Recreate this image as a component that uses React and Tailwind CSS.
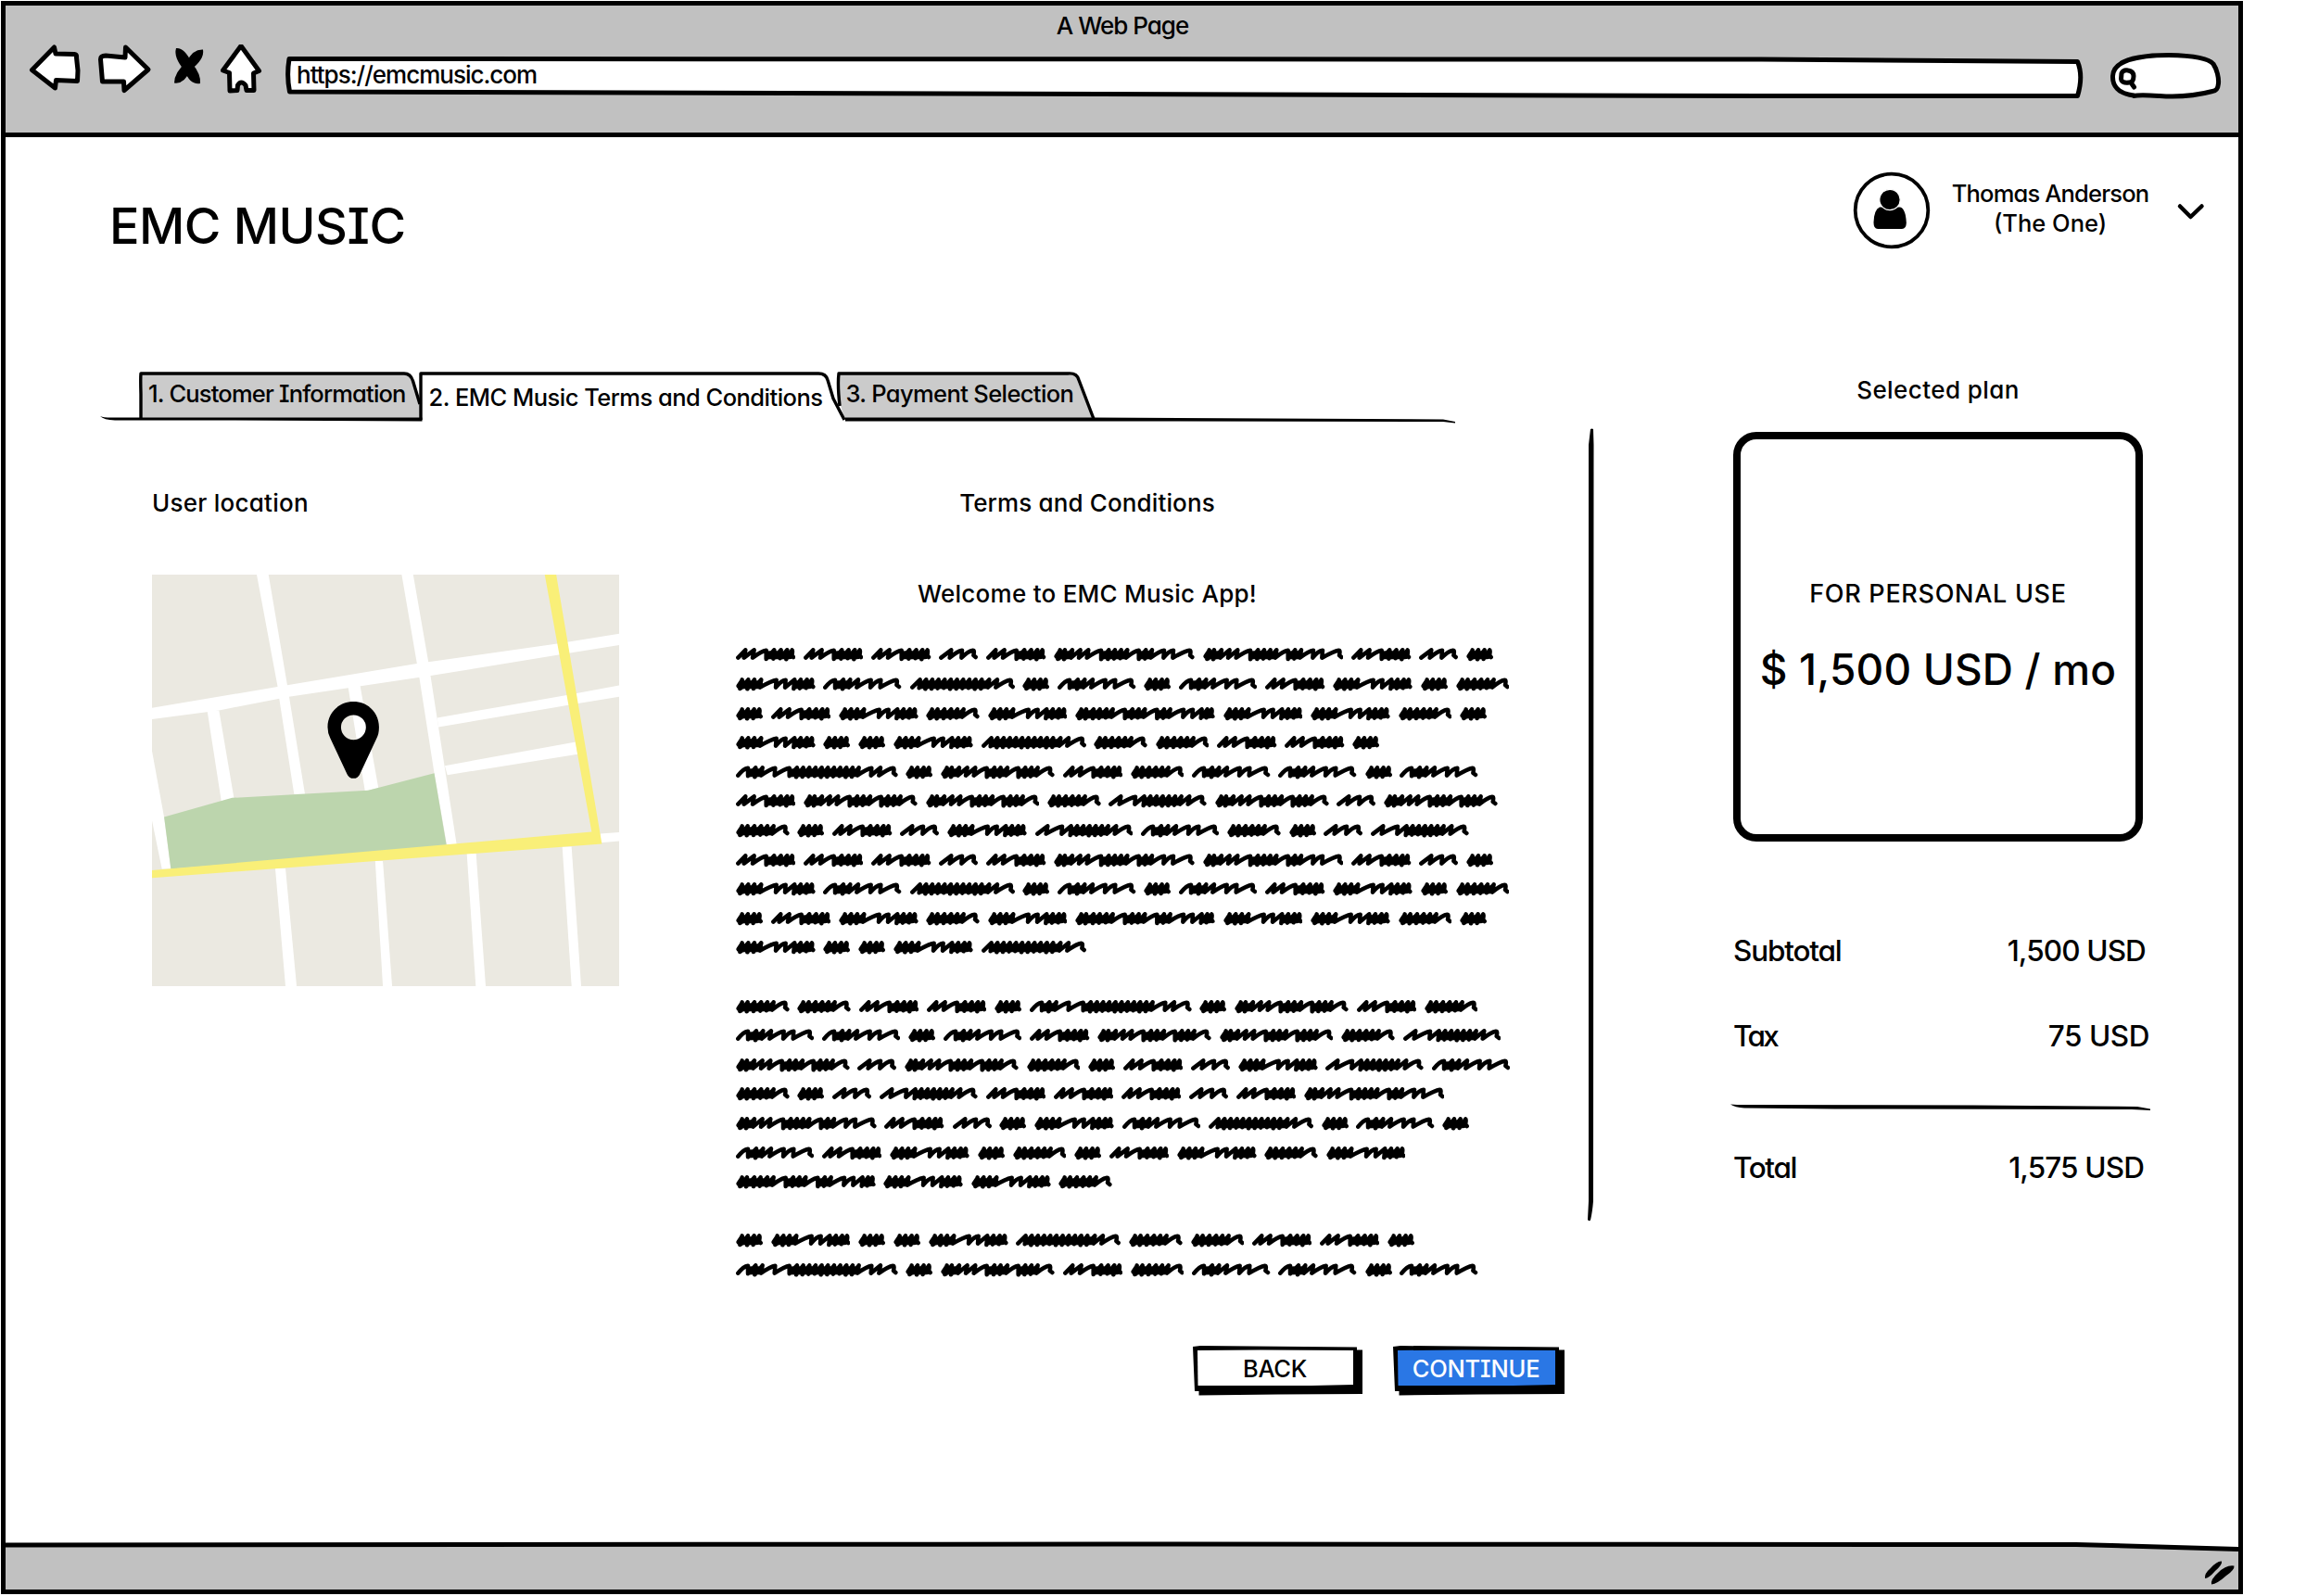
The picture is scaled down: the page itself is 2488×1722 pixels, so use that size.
import React from "react";

/* Scribbled words, in thirds of a pixel: width, heavy start or not, x positions of the stroke tops. */
const WORDS = {
  a: [193, 0, [33, 61, 103, 126, 148, 168, 184]],
  b: [126, 0, [42, 80, 115]],
  c: [87, 1, [22, 41, 61, 78]],
  d: [173, 1, [22, 40, 62, 84, 104, 124, 162]],
  e: [257, 1, [22, 42, 62, 84, 136, 166, 192, 212, 232, 248]],
  f: [253, 0, [44, 68, 90, 116, 160, 192, 241]],
  g: [339, 0, [34, 54, 74, 94, 114, 134, 154, 174, 194, 214, 234, 258, 284, 328]],
  h: [368, 1, [22, 38, 62, 88, 114, 154, 176, 196, 218, 256, 276, 296, 316, 356]],
  i: [317, 0, [42, 92, 118, 138, 158, 178, 198, 218, 238, 264, 305]],
  j: [524, 0, [44, 66, 88, 132, 178, 200, 220, 240, 260, 280, 300, 320, 340, 360, 380, 400, 444, 470, 513]],
  k: [455, 1, [22, 38, 62, 88, 114, 158, 180, 200, 220, 240, 280, 300, 320, 362, 392, 444]],
  l: [452, 1, [22, 38, 62, 82, 104, 124, 166, 188, 208, 228, 270, 290, 310, 356, 386, 412, 430, 444]],
};

function wordPath([w, heavy, tops]) {
  let d = heavy ? "M8 27L18 12L13 36" : "M7 32";
  let body = heavy ? `M9 29L${tops[0]} 20M13 33L${tops[0]} 30` : "";
  let px = heavy ? 13 : 7;
  tops.forEach((t, i) => {
    d += t - px > 36 ? `Q${t - 20} 10 ${t - 5} 8` : `L${t - 2} 7`;
    const next = tops[i + 1];
    if (next === undefined) {
      d += `Q${t + 1} 8 ${t - 3} 24L${w - 7} 30`;
      return;
    }
    const dense = next - t <= 24;
    px = t - (dense ? 5 : 7);
    d += `L${px} ${dense ? 34 + ((i * 3) % 4) : 32}`;
    if (dense) body += `M${t - 2} 17L${next - 4} 16M${t - 4} 31L${next - 6} 29`;
  });
  return d + body;
}

const PARAGRAPHS = [
  ["aaabakkabc", "efgcfcfaecd", "caedeleedc", "eccegddaac", "jchadffcf", "ahhdihbh", "dcabeifdcbi", "aaabakkabc", "efgcfcfaecd", "caedeleedc", "ecceg"],
  ["ddaacjchad", "ffcfahhdi", "hbhdcabeif", "dcbiaaabak", "kabcefgcfc", "faecdcaede", "leed"],
  ["ceccegddaac", "jchadffcf"],
];

function Word({ k }) {
  const w = WORDS[k][0];
  return (
    <svg className="shrink-0" width={w / 3} height="15" viewBox={`0 0 ${w} 45`}>
      <path d={wordPath(WORDS[k])} fill="none" stroke="#000" strokeWidth="13.500" strokeLinejoin="round" strokeLinecap="round" />
    </svg>
  );
}

function T({ s, className }) {
  return <span className={"block whitespace-nowrap " + className}>{s}</span>;
}

function Line({ d, sw = 5, fill = "#fff" }) {
  return <path d={d} fill={fill} stroke="#000" strokeWidth={sw} strokeLinejoin="round" strokeLinecap="round" />;
}

function Header() {
  return (
    <header className="h-[142px] shrink-0 border-b-[5px] border-black bg-[#c1c1c1]">
      <div className="flex h-[42px] items-center justify-center pl-px">
        <T s="A Web Page" className="text-[26px] tracking-[-1px]" />
      </div>
      <div className="flex h-[60px] pl-[22px]">
        <svg width="60" height="60" viewBox="28 48 60 60"><Line d="M34.500 75.500L58.500 51L60 58L80 58.500Q83 59 82.500 62L84 76L83.500 87.500L60.500 86.500L59.500 95Z" /></svg>
        <svg className="ml-4" width="62" height="60" viewBox="104 48 62 60"><Line d="M135.500 51L160 75L134 97.500L133.500 88L110.500 88L108.500 64Q108.500 60 114 60L135 62Z" /></svg>
        <svg className="ml-[18px]" width="40" height="60" viewBox="184 48 40 60">
          <path d="M190 52Q199 51 207 68Q217 80 216 90Q205 92 199 76Q187 62 190 52Z" />
          <path d="M219 53.500Q208 53 202 66Q188 78 188 89.500Q199 91 205 76Q221 64 219 53.500Z" />
        </svg>
        <svg className="ml-3" width="48" height="60" viewBox="236 48 48 60"><Line d="M260 49.500L279.500 76.500L273.500 79L274 97.500L266 97.500L265 92Q260 86 256.500 92L256 97.500L248 98L247.500 78.500L240.500 76Z" /></svg>
        <div className="relative ml-[22px] flex h-[60px] w-[1944px] items-start">
          <svg className="absolute inset-0" width="1944" height="60" viewBox="306 48 1944 60"><Line d="M312 63.500L1900 64L2241.500 66.500Q2248 82 2241.500 103.500L1900 103.500L312.500 99Q309 82 312 63.500Z" /></svg>
          <T s="https://emcmusic.com" className="relative ml-[14px] mt-[18px] text-[26px] leading-[30px] tracking-[-1px]" />
        </div>
        <svg className="ml-6" width="126" height="60" viewBox="2274 48 126 60">
          <Line d="M2302 103C2285 101 2279 92 2279.500 82C2280 66 2305 59.500 2340 59.500C2370 60 2384 64 2388 69C2392 75 2394 84 2393.500 90C2393 96 2391 98 2387 98.500C2370 103 2350 105 2330 103.500C2315 102.500 2308 102 2302 103.500" />
          <Line d="M2289 79Q2291 75 2296 76Q2302 77 2302 82Q2302 89 2297 89Q2289 90 2288.500 85ZM2299 89L2302.500 94" />
        </svg>
      </div>
    </header>
  );
}

function Profile() {
  return (
    <div className="flex">
      <svg className="mt-[37px]" width="84" height="84" viewBox="1999 185 84 84">
        <circle cx="2041" cy="227" r="39.300" fill="#fff" stroke="#000" strokeWidth="3.800" />
        <path d="M2028 223.500Q2022 226 2021.500 240Q2021.500 247 2026 247H2052Q2057 247 2056.800 240Q2056 225 2050 223.500Z" />
        <circle cx="2039" cy="215.500" r="11.200" stroke="#fff" strokeWidth="1.200" />
      </svg>
      <div className="ml-[22px] mt-[45px] flex w-[214px] flex-col items-center text-[25.5px] leading-[31.5px]">
        <T s="Thomas Anderson" className="tracking-[-0.82px]" />
        <T s="(The One)" className="" />
      </div>
      <svg className="ml-[28px] mt-[68px]" width="34" height="24" viewBox="2347 216 34 24"><Line fill="none" sw={4.5} d="M2352 222.500L2363.500 234L2375.500 222.500" /></svg>
    </div>
  );
}

function Tabs() {
  return (
    <div className="relative ml-[98px] flex h-[60px] w-[1470px] text-[25.5px] leading-[30px]">
      <svg className="absolute inset-0" width="1470" height="60" viewBox="104 398 1470 60">
        <path d="M152 403H436Q444 403 446.500 411L453.500 440V452H152Z" fill="#cbcbcb" />
        <path d="M905 403H1154Q1161 403 1163 410L1180 452H911L905 430Z" fill="#cbcbcb" />
        <g fill="none" stroke="#000" strokeWidth="3.400" strokeLinejoin="round">
          <path d="M152 453V425Q151.500 408 152 403H436Q443 403 445.500 411L453 436" />
          <path d="M454 453V403H882Q891 402.500 893 410L899 430L911 453" />
          <path d="M906 438Q903.500 415 905 403H1152Q1162 402 1164 410L1180 452" />
        </g>
        <path d="M108 449Q113 451 124 450.500H455.500V454.500L250 453.500H124Q112 453 108 449Z" />
        <path d="M912 450.500L1180 450.500L1557 452.500L1570 455V456.500L1557 455L1180 454.500L912 454.500Z" />
      </svg>
      <T s="1. Customer Information" className="relative ml-[56px] mt-[12px] tracking-[-0.82px]" />
      <T s="2. EMC Music Terms and Conditions" className="relative ml-[25px] mt-[16px] tracking-[-0.53px]" />
      <T s="3. Payment Selection" className="relative ml-[25px] mt-[12px] tracking-[-0.62px]" />
    </div>
  );
}

function CityMap() {
  return (
    <svg width="504" height="444" viewBox="41 60 1463 1331" preserveAspectRatio="none">
      <rect x="41" y="60" width="1463" height="1331" fill="#ebe9e1" />
      <g fill="#fff">
        <path d="M369 60H406L465 420L520 770H486L440 465L434 420Z" />
        <path d="M823 60H859L907 345L995 932H964L925 702L877 385Z" />
        <path d="M41 491L434 423L870 348L1310 283L1504 251V288L1310 320L914 387L470 455L251 499L41 528Z" />
        <path d="M214 500H251L298 785L258 792Z" />
        <path d="M655 422L692 414L750 750L708 760Z" />
        <path d="M934 523L1340 450L1504 418V455L1340 483L938 553Z" />
        <path d="M958 678L1368 601L1374 641L966 708Z" />
        <path d="M41 630L79 845L100 1012H72L41 855Z" />
        <path d="M427 1010H459L494 1391H459Z" />
        <path d="M740 986H764L793 1391H764Z" />
        <path d="M1027 962H1056L1086 1391H1055Z" />
        <path d="M1326 940H1355L1385 1391H1355Z" />
        <path d="M1445 898L1504 893V922L1445 927Z" />
      </g>
      <path d="M79 844L292 782L718 758L925 702L964 940L100 1012Z" fill="#bcd5ad" />
      <path d="M1271 60H1307L1450 931L41 1041V1016L1418 892Z" fill="#f9ef78" />
      <path fillRule="evenodd" d="M672 471C718 471 752 508 752 553C752 570 749 580 745 588L692 705Q686 719 672 719Q658 719 652 705L599 588Q591 572 591 553C591 508 626 471 672 471ZM672 514A39 40 0 1 0 672 594A39 40 0 1 0 672 514Z" />
    </svg>
  );
}

function Button({ s, w, fill, className }) {
  return (
    <button className={"relative flex h-[56px] items-center justify-center text-[25.5px] leading-[30px] " + className}>
      <svg className="absolute inset-0" width={w} height="56" viewBox={`0 0 ${w} 56`}>
        <path d={`M0 1L8 0L${w - 6} 1.500V4.500H${w}V52L${w * 0.5} 52.500L6.500 53.500V49H2Z`} />
        <path d={`M5 5L${w * 0.4} 4.500L${w - 10} 5V42L${w * 0.7} 43H5.500Z`} fill={fill} />
      </svg>
      <T s={s} className="relative -mt-[6px] mr-[6px]" />
    </button>
  );
}

function Row({ l, v, className, lc, vc }) {
  return (
    <div className={"flex h-[40px] justify-between pl-[4px] text-[31.5px] leading-[40px] " + className}>
      <T s={l} className={lc} />
      <T s={v} className={vc} />
    </div>
  );
}

function Summary() {
  return (
    <aside className="w-[456px]">
      <div className="flex h-[126px] justify-center pr-[6px] pt-[66px] text-[26px] leading-[30px]">
        <T s="Selected plan" className="tracking-[0.42px]" />
      </div>
      <div className="ml-[4px] flex h-[442px] w-[442px] flex-col items-center rounded-[25px] border-8 border-black">
        <T s="FOR PERSONAL USE" className="mt-[152px] text-[27px] leading-[30px] tracking-[0.7px]" />
        <T s="$ 1,500 USD / mo" className="mt-[36px] text-[46px] leading-[60px] tracking-[0.17px]" />
      </div>
      <Row l="Subtotal" v="1,500 USD" className="mt-[98px] pr-[7px]" lc="tracking-[-1.2px]" vc="tracking-[-0.87px]" />
      <Row l="Tax" v="75 USD" className="mt-[52px] pr-[3px]" lc="tracking-[-2.7px]" vc="tracking-[-0.45px]" />
      <svg className="mt-[51px]" width="456" height="10" viewBox="1866 1188 456 10"><path d="M1867 1190.500Q1874 1191 1882 1191L2130 1191.500L2306 1193L2320 1195.500V1197L2300 1196L1980 1195.500L1882 1194.500Q1872 1194 1867 1190.500Z" /></svg>
      <Row l="Total" v="1,575 USD" className="mt-[41px] pr-[9px]" lc="tracking-[-1.38px]" vc="tracking-[-0.87px]" />
    </aside>
  );
}

function Terms() {
  return (
    <section className="ml-[126px] w-[900px]">
      <div className="flex w-[758px] flex-col items-center text-[26px] leading-[30px]">
        <T s="Terms and Conditions" className="tracking-[0.13px]" />
        <T s="Welcome to EMC Music App!" className="mt-[68px] tracking-[0.26px]" />
      </div>
      <div className="mt-[35px] flex flex-col gap-[31.62px]">
        {PARAGRAPHS.map((p, i) => (
          <div key={i}>
            {p.map((l, j) => (
              <div key={j} className="flex h-[31.62px] items-center gap-[8.8px]">
                {l.split("").map((k, n) => <Word key={n} k={k} />)}
              </div>
            ))}
          </div>
        ))}
      </div>
      <div className="mt-[66px] flex gap-[33px] pl-[493px]">
        <Button s="BACK" w={183} fill="#fff" className="w-[183px] tracking-[-0.33px] text-black" />
        <Button s="CONTINUE" w={185} fill="#2a77e5" className="w-[185px] tracking-[-0.2px] text-white" />
      </div>
    </section>
  );
}

export default function App() {
  return (
    <div className="h-[1722px] w-[2488px] overflow-hidden bg-white pl-px pt-px font-['Inter',sans-serif] font-medium text-black [font-feature-settings:'cv11','cv08']">
      <div className="flex h-[1719px] w-[2419px] flex-col border-[5px] border-black">
        <Header />
        <main className="grow">
          <div className="flex h-[192px] justify-between pr-[34px]">
            <T s="EMC MUSIC" className="ml-[112px] mt-[46px] text-[54px] leading-[100px] tracking-[-0.5px]" />
            <Profile />
          </div>
          <div className="flex">
            <div className="w-[1704px] pt-[58px]">
              <Tabs />
              <div className="flex pl-[158px] pt-[70px]">
                <section className="w-[504px]">
                  <T s="User location" className="mb-[62px] text-[26px] leading-[30px] tracking-[0.25px]" />
                  <CityMap />
                </section>
                <Terms />
              </div>
            </div>
            <svg className="mt-[120px]" width="16" height="860" viewBox="1710 460 16 860"><path d="M1716 463Q1717.500 462 1719 463L1719.500 480L1719 1296Q1718 1308 1716 1316.500Q1714 1318 1713 1316L1714 1296V480Z" /></svg>
            <div className="ml-[140px]"><Summary /></div>
          </div>
        </main>
        <footer className="relative h-[53px] shrink-0">
          <svg className="absolute inset-0" width="2409" height="53" viewBox="6 1662 2409 53">
            <path d="M6 1667L1200 1666L2240 1667L2415 1671.500V1715H6Z" fill="#c1c1c1" />
            <path d="M6 1667L1200 1666L2240 1666.500L2415 1671.500" fill="none" stroke="#000" strokeWidth="5" />
            <path d="M2379 1703Q2378 1698 2385 1692Q2392 1684 2397 1684.500Q2398 1688 2390 1695Q2383 1703 2379 1703ZM2386 1709.500Q2385 1704 2393 1697Q2402 1688 2410.500 1689.500Q2411 1694 2402 1700Q2392 1709 2386 1709.500Z" />
          </svg>
        </footer>
      </div>
    </div>
  );
}
